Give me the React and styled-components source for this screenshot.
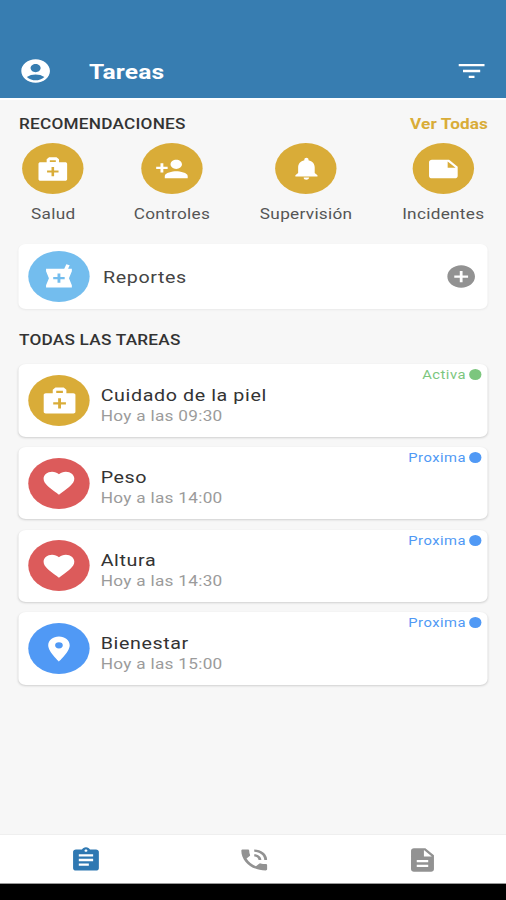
import styled, { createGlobalStyle } from "styled-components";
import {
  MdAccountCircle,
  MdAddCircle,
  MdAssignment,
  MdDescription,
  MdFavorite,
  MdFilterList,
  MdLocalPharmacy,
  MdLocationOn,
  MdNote,
  MdNotifications,
  MdPhoneInTalk,
} from "react-icons/md";

const GOLD = "#d9ac38";
const RED = "#dc5b5b";
const BLUE = "#5099f5";
const GREEN = "#7cc67e";

const RECOMMENDATIONS = [
  { label: "Salud", icon: <MedicalBagIcon size={28} /> },
  { label: "Controles", icon: <PersonAddIcon /> },
  { label: "Supervisión", icon: <MdNotifications size={27} /> },
  { label: "Incidentes", icon: <MdNote size={28} /> },
];

const TASKS = [
  {
    title: "Cuidado de la piel",
    time: "Hoy a las 09:30",
    status: "Activa",
    color: GOLD,
    icon: <MedicalBagIcon size={31} />,
  },
  {
    title: "Peso",
    time: "Hoy a las 14:00",
    status: "Proxima",
    color: RED,
    icon: <MdFavorite size={30} />,
  },
  {
    title: "Altura",
    time: "Hoy a las 14:30",
    status: "Proxima",
    color: RED,
    icon: <MdFavorite size={30} />,
  },
  {
    title: "Bienestar",
    time: "Hoy a las 15:00",
    status: "Proxima",
    color: BLUE,
    icon: <MdLocationOn size={30} />,
  },
];

function MedicalBagIcon({ size }) {
  return (
    <svg width={size} height={size} viewBox="0 0 24 24" fill="currentColor">
      <path
        fillRule="evenodd"
        d="M9.4 2h5.2l1.7 1.7v2.6h4.4c.7 0 1.3.6 1.3 1.3v13.1c0 .7-.6 1.3-1.3 1.3H3.3c-.7 0-1.3-.6-1.3-1.3V7.6c0-.7.6-1.3 1.3-1.3h4.4V3.7zM9.9 4.5v1.6h4.2V4.5zM11.1 10.2v3.1H8v1.8h3.1v3.1h1.8v-3.1H16v-1.8h-3.1v-3.1z"
      />
    </svg>
  );
}

function PersonAddIcon() {
  return (
    <svg width="28" height="28" viewBox="0 0 24 24" fill="currentColor">
      <path d="M15 12c2.21 0 4-1.79 4-4s-1.79-4-4-4-4 1.79-4 4 1.79 4 4 4zm-9-2V7H4v3H1v2h3v3h2v-3h3v-2H6zm9 4c-2.67 0-8 1.34-8 4v2h16v-2c0-2.66-5.33-4-8-4z" />
    </svg>
  );
}

const App = () => {
  return (
    <>
      <GlobalStyle />
      <Screen>
        <Header>
          <MdAccountCircle size={28} />
          <HeaderTitle>Tareas</HeaderTitle>
          <MdFilterList size={28} />
        </Header>
        <Main>
          <SectionHead>
            <SectionTitle>RECOMENDACIONES</SectionTitle>
            <SeeAll>Ver Todas</SeeAll>
          </SectionHead>
          <Recommendations>
            {RECOMMENDATIONS.map(({ label, icon }) => (
              <Recommendation key={label}>
                <IconCircle color={GOLD}>{icon}</IconCircle>
                <RecommendationLabel>{label}</RecommendationLabel>
              </Recommendation>
            ))}
          </Recommendations>
          <ReportCard>
            <IconCircle color="#73bdee">
              <MdLocalPharmacy size={28} />
            </IconCircle>
            <ReportTitle>Reportes</ReportTitle>
            <MdAddCircle size={27} />
          </ReportCard>
          <TasksTitle>TODAS LAS TAREAS</TasksTitle>
          <TaskList>
            {TASKS.map(({ title, time, status, color, icon }) => (
              <TaskCard key={title}>
                <IconCircle color={color}>{icon}</IconCircle>
                <TaskText>
                  <TaskTitle>{title}</TaskTitle>
                  <TaskTime>{time}</TaskTime>
                </TaskText>
                <Status $active={status === "Activa"}>
                  {status}
                  <StatusDot />
                </Status>
              </TaskCard>
            ))}
          </TaskList>
        </Main>
        <BottomNav>
          <NavItem $selected>
            <MdAssignment size={28} />
          </NavItem>
          <NavItem>
            <MdPhoneInTalk size={28} />
          </NavItem>
          <NavItem>
            <MdDescription size={28} />
          </NavItem>
        </BottomNav>
        <SystemBar />
      </Screen>
    </>
  );
};

const GlobalStyle = createGlobalStyle`
  * {
    box-sizing: border-box;
  }

  body {
    margin: 0;
    overflow: hidden;
    font-family: Roboto, "Liberation Sans", sans-serif;
  }

  svg {
    display: block;
    flex-shrink: 0;
  }
`;

/* 412px wide phone layout, stretched to fill the 506px viewport */
const Screen = styled.div`
  display: flex;
  flex-direction: column;
  width: 412px;
  height: 900px;
  background: #f7f7f7;
  transform: scaleX(1.22816);
  transform-origin: 0 0;
`;

const Header = styled.header`
  display: flex;
  align-items: center;
  height: 100px;
  padding: 44px 14px 0 15px;
  border-bottom: 2px solid #fdfeff;
  background: #377db1;
  color: #fff;
`;

const HeaderTitle = styled.h1`
  flex: 1;
  margin: 1px 0 0 29.5px;
  font-size: 20px;
  font-weight: 700;
  letter-spacing: 0.1px;
  line-height: 24px;
`;

const Main = styled.main`
  flex: 1;
  padding: 14px 14.6px 0 15.4px;
`;

const SectionHead = styled.div`
  display: flex;
  justify-content: space-between;
  line-height: 20px;
`;

const SectionTitle = styled.h2`
  margin: 0;
  color: #333;
  font-size: 14px;
  font-weight: 500;
  letter-spacing: 0.2px;
  line-height: 20px;
`;

const SeeAll = styled.span`
  color: ${GOLD};
  font-size: 14px;
  font-weight: 700;
  letter-spacing: 0.1px;
`;

const Recommendations = styled.div`
  display: flex;
  justify-content: space-between;
  margin-top: 9px;
  padding: 0 3px;
`;

const Recommendation = styled.div`
  display: flex;
  flex-direction: column;
  align-items: center;
`;

const RecommendationLabel = styled.span`
  margin-top: 10px;
  color: #555;
  font-size: 14px;
  letter-spacing: 0.24px;
  line-height: 20px;
`;

const IconCircle = styled.div`
  display: flex;
  flex-shrink: 0;
  align-items: center;
  justify-content: center;
  width: 50px;
  height: 51px;
  border-radius: 50%;
  background: ${({ color }) => color};
  color: #fff;
`;

const Card = styled.div`
  display: flex;
  align-items: center;
  border-radius: 6px;
  background: #fff;
  box-shadow: 0 1px 2px rgba(0, 0, 0, 0.16);
`;

const ReportCard = styled(Card)`
  height: 65px;
  margin-top: 20px;
  padding: 0 8px;
  box-shadow: 0 1px 2px rgba(0, 0, 0, 0.06);
  color: #929292;
`;

const ReportTitle = styled.span`
  flex: 1;
  margin: 2px 0 0 10.5px;
  color: #444;
  font-size: 16px;
  letter-spacing: 0.5px;
`;

const TasksTitle = styled(SectionTitle)`
  margin-top: 21px;
`;

const TaskList = styled.div`
  display: flex;
  flex-direction: column;
  gap: 10.25px;
  margin-top: 14px;
`;

const TaskCard = styled(Card)`
  height: 72.5px;
  padding-left: 8px;
`;

const TaskText = styled.div`
  display: flex;
  flex: 1;
  flex-direction: column;
  margin: 10.5px 0 0 8.6px;
`;

const TaskTitle = styled.span`
  color: #333;
  font-size: 16px;
  letter-spacing: 0.5px;
  line-height: 20px;
`;

const TaskTime = styled.span`
  color: #9b9b9b;
  font-size: 14px;
  letter-spacing: 0.24px;
  line-height: 20px;
`;

const Status = styled.div`
  display: flex;
  align-items: center;
  align-self: flex-start;
  gap: 3px;
  margin: 3px 5px 0 0;
  color: ${({ $active }) => ($active ? GREEN : BLUE)};
  font-size: 12px;
  letter-spacing: 0.4px;
  line-height: 16px;
`;

const StatusDot = styled.span`
  width: 10px;
  height: 11px;
  margin-top: -1px;
  border-radius: 50%;
  background: currentColor;
`;

const BottomNav = styled.nav`
  display: flex;
  height: 50px;
  padding-left: 1px;
  border-top: 1px solid #efefef;
  border-bottom: 1px solid #999;
  background: #fff;
`;

const NavItem = styled.div`
  display: flex;
  flex: 1;
  align-items: center;
  justify-content: center;
  padding-top: 2px;
  color: ${({ $selected }) => ($selected ? "#2f78b2" : "#929292")};
`;

const SystemBar = styled.div`
  height: 16px;
  background: #000;
`;

export default App;
